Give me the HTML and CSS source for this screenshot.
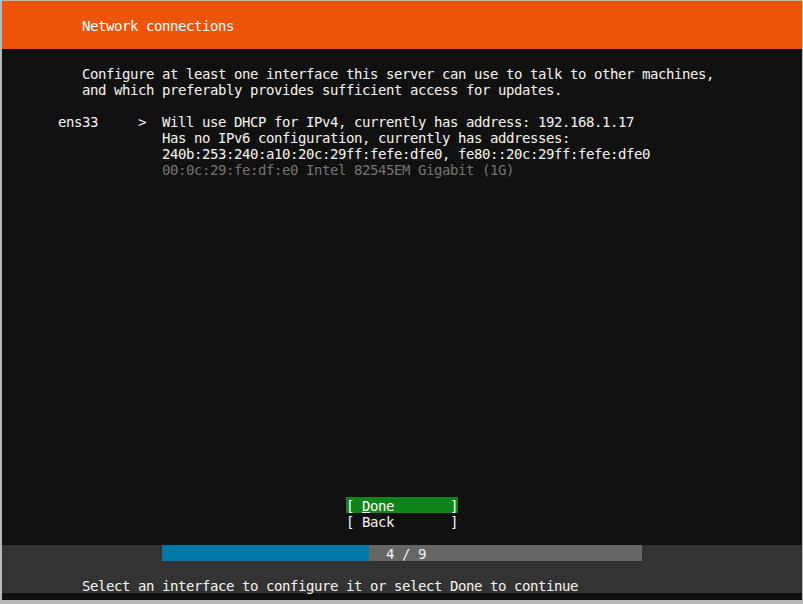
FILE: index.html
```html
<!DOCTYPE html>
<html>
<head>
<meta charset="utf-8">
<title>Network connections</title>
<link rel="stylesheet" href="styles.css">
</head>
<body>
<div class="term">
  <header class="header">
    <div class="row"></div>
    <div class="row c10">Network connections</div>
    <div class="row"></div>
  </header>
  <main class="body">
    <div class="row"></div>
    <div class="row c10">Configure at least one interface this server can use to talk to other machines,</div>
    <div class="row c10">and which preferably provides sufficient access for updates.</div>
    <div class="row"></div>
    <div class="row iface"><span class="name">ens33</span><span class="arrow">&gt;</span><span>Will use DHCP for IPv4, currently has address: 192.168.1.17</span></div>
    <div class="row c20">Has no IPv6 configuration, currently has addresses:</div>
    <div class="row c20">240b:253:240:a10:20c:29ff:fefe:dfe0, fe80::20c:29ff:fefe:dfe0</div>
    <div class="row c20 dim">00:0c:29:fe:df:e0 Intel 82545EM Gigabit (1G)</div>
  </main>
  <div class="buttons">
    <div class="row"><span class="btn focus">[ <u>D</u>one       ]</span></div>
    <div class="row"><span class="btn">[ Back       ]</span></div>
    <div class="row"></div>
  </div>
  <footer class="footer">
    <div class="row barrow">
      <div class="bar">
        <div class="fill" style="width:207px"></div>
        <div class="label">4 / 9</div>
      </div>
    </div>
    <div class="row"></div>
    <div class="row c10">Select an interface to configure it or select Done to continue</div>
  </footer>
  <div class="rest"></div>
</div>
</body>
</html>
```
FILE: styles.css
```css
html, body {
  margin: 0;
  padding: 0;
}
body {
  background: #b9b9b9;
  width: 803px;
  height: 604px;
  overflow: hidden;
}
.term {
  margin: 1px 0 0 2px;
  width: 800px;
  height: 599px;
  background: #111111;
  color: #f4f4f4;
  font-family: "DejaVu Sans Mono", "Liberation Mono", monospace;
  font-size: 14px;
  letter-spacing: -0.4287px;
  display: flex;
  flex-direction: column;
}
.row {
  box-sizing: border-box;
  height: 16px;
  padding-top: 1px;
  line-height: 16px;
  white-space: pre;
  display: flex;
  align-items: flex-start;
}
.barrow {
  padding-top: 0;
}
.c10 { padding-left: 80px; }
.c20 { padding-left: 160px; }
.header {
  background: #eb5409;
  color: #ffffff;
  display: flex;
  flex-direction: column;
}
.body {
  display: flex;
  flex-direction: column;
  flex: 1;
}
.iface .name {
  margin-left: 56px;
  width: 80px;
}
.iface .arrow {
  width: 24px;
}
.dim { color: #747474; }
.buttons {
  display: flex;
  flex-direction: column;
}
.btn {
  box-sizing: border-box;
  margin-left: 344px;
  margin-top: -1px;
  padding-top: 1px;
  width: 112px;
  height: 16px;
  line-height: 16px;
}
.btn.focus {
  background: #0e841a;
  color: #ffffff;
}
.btn u {
  text-decoration: underline;
  text-underline-offset: 1px;
}
.footer {
  background: #333333;
  display: flex;
  flex-direction: column;
}
.bar {
  margin-left: 160px;
  width: 480px;
  height: 16px;
  background: #666666;
  display: grid;
  grid-template-columns: 480px;
}
.fill {
  grid-area: 1 / 1;
  background: #0079aa;
  height: 16px;
}
.label {
  grid-area: 1 / 1;
  margin-left: 224px;
  padding-top: 1px;
  line-height: 16px;
  color: #f4f4f4;
  z-index: 1;
}
.rest {
  height: 7px;
}
```
